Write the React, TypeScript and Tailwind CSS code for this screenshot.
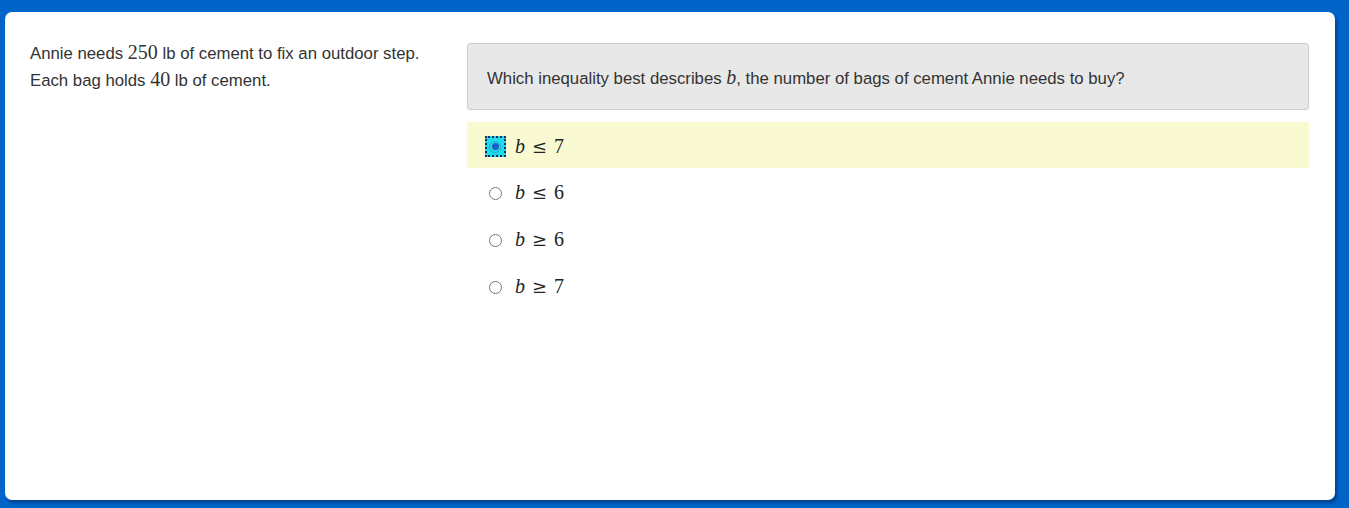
import React from 'react'

const sans = { fontFamily: '"Liberation Sans", Arial, sans-serif' }

function M({ children, italic }: { children: React.ReactNode; italic?: boolean }) {
  return (
    <span className={`font-['Liberation_Serif',serif] text-[20px] leading-none ${italic ? 'italic' : ''}`}>
      {children}
    </span>
  )
}

const options = [
  { id: 'a', op: '≤', n: '7' },
  { id: 'b', op: '≤', n: '6' },
  { id: 'c', op: '≥', n: '6' },
  { id: 'd', op: '≥', n: '7' },
]

export default function App() {
  const selected = 'a'

  return (
    <div className="w-[1349px] h-[508px] bg-[#0064c8] pt-[12px] pl-[5px] pr-[14px] pb-[8px]" style={sans}>
      <div className="h-full bg-white rounded-[7px] shadow-[2px_3px_3px_rgba(0,40,100,0.55)] flex pl-[25px] pr-[26px] pt-[28px] text-[16.75px] text-[#333]">
        {/* Stimulus */}
        <div className="w-[437px] shrink-0 pr-[10px] leading-[27px]">
          <p>Annie needs <M>250</M> lb of cement to fix an outdoor step.</p>
          <p>Each bag holds <M>40</M> lb of cement.</p>
        </div>

        {/* Question */}
        <div className="flex-1 mt-[3px]">
          <div className="h-[67px] bg-[#e8e8e8] border border-[#cdcdcd] rounded-[3px] flex items-center px-[19px] pt-[4px]">
            <span>
              Which inequality best describes <M italic>b</M>, the number of bags of cement Annie needs to buy?
            </span>
          </div>

          <div className="mt-[12px]">
            {options.map(o => (
              <div key={o.id}
                className={`flex items-center pl-[17px] pt-[3px] ${o.id === selected ? 'bg-[#fafad2] h-[46px]' : 'h-[47px]'}`}>
                <div className="w-[22px] h-[22px] flex items-center justify-center">
                  {o.id === selected ? (
                    <div className="w-[21px] h-[21px] bg-[#1fdcea] border-2 border-dotted border-[#1a2a6a] flex items-center justify-center">
                      <div className="w-[12px] h-[12px] rounded-full border border-[#2aa0d8] flex items-center justify-center">
                        <div className="w-[7px] h-[7px] rounded-full bg-[#1560c0]" />
                      </div>
                    </div>
                  ) : (
                    <div className="w-[13px] h-[13px] rounded-full bg-white border border-[#777]" />
                  )}
                </div>
                <span className="ml-[9px] text-[#222] pt-[2px]">
                  <M italic>b</M>
                  <span className="ml-[7px] font-['DejaVu_Serif',serif] text-[18px] leading-none">{o.op}</span>
                  <span className="ml-[7px]"><M>{o.n}</M></span>
                </span>
              </div>
            ))}
          </div>
        </div>
      </div>
    </div>
  )
}
